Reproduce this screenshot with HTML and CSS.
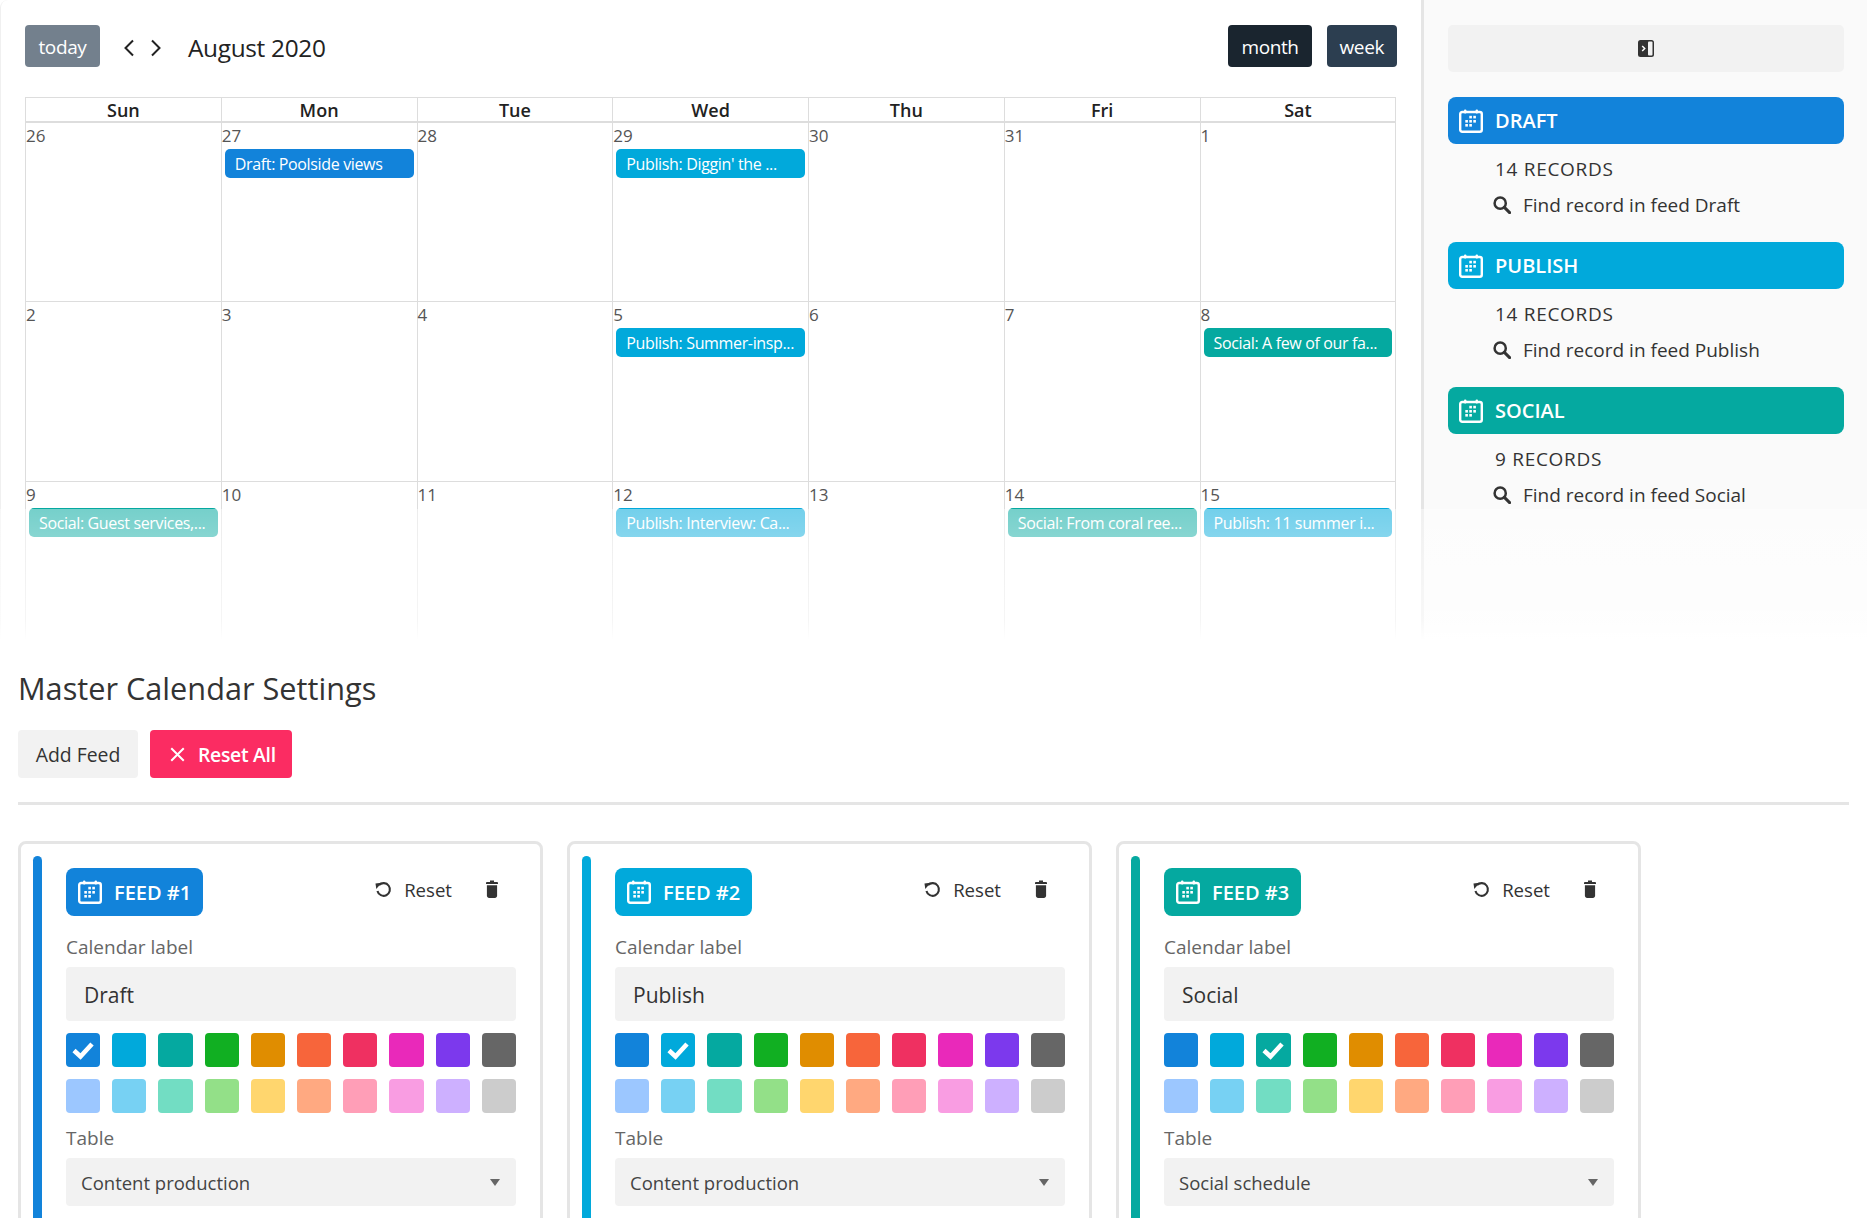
FILE: index.html
```html
<!DOCTYPE html>
<html lang="en">
<head>
<meta charset="utf-8">
<title>Master Calendar</title>
<link rel="stylesheet" href="styles.css">
</head>
<body>
<svg class="defs" aria-hidden="true">
  <symbol id="cal" viewBox="0 0 24 24">
    <rect x="1.2" y="3" width="21.6" height="19.8" rx="2" fill="none" stroke="currentColor" stroke-width="2.4"/>
    <rect x="5" y="0.6" width="2.4" height="4" rx="1" fill="currentColor"/>
    <rect x="16.6" y="0.6" width="2.4" height="4" rx="1" fill="currentColor"/>
    <g fill="currentColor">
      <rect x="10.3" y="6.800" width="2.6" height="2.6"/><rect x="14.3" y="6.800" width="2.6" height="2.6"/>
      <rect x="6.300" y="11" width="2.6" height="2.6"/><rect x="10.3" y="11" width="2.6" height="2.6"/><rect x="14.3" y="11" width="2.6" height="2.6"/>
      <rect x="6.300" y="15" width="2.6" height="2.6"/><rect x="10.3" y="15" width="2.6" height="2.6"/>
    </g>
  </symbol>
  <symbol id="search" viewBox="0 0 18 18">
    <circle cx="7.2" cy="7.2" r="5.6" fill="none" stroke="currentColor" stroke-width="2.5"/>
    <path d="M11.4 11.4 16.6 16.6" stroke="currentColor" stroke-width="3" stroke-linecap="round"/>
  </symbol>
  <symbol id="reset" viewBox="0 0 18 18">
    <path d="M4.2 4.4A6.7 6.7 0 1 1 2.6 10.6" fill="none" stroke="currentColor" stroke-width="2.2"/>
    <path d="M0.8 2.2 7.2 2.2 1 8.2Z" fill="currentColor" transform="rotate(-6 4 5)"/>
  </symbol>
  <symbol id="trash" viewBox="0 0 12 18">
    <path d="M4 .5h4v1.6h3.2c.4 0 .8.4.8.8v1H0v-1c0-.4.4-.8.8-.8H4z" fill="currentColor"/>
    <path d="M.9 5.2h10.2v10.6c0 1.2-1 2.2-2.2 2.2H3.100c-1.200 0-2.200-1-2.200-2.200z" fill="currentColor"/>
  </symbol>
  <symbol id="check" viewBox="0 0 24 20">
    <path d="M3 10.500 9.500 16.500 21 4" fill="none" stroke="currentColor" stroke-width="4.600"/>
  </symbol>
</svg>

<section class="top">
  <div class="calendar">
    <div class="toolbar">
      <div class="toolbar-left">
        <span class="btn btn-today">today</span>
        <span class="nav">
          <svg class="chev" viewBox="0 0 12 18"><path d="M10 1.500 2.500 9 10 16.500" fill="none" stroke="currentColor" stroke-width="2"/></svg>
          <svg class="chev" viewBox="0 0 12 18"><path d="M2 1.500 9.500 9 2 16.500" fill="none" stroke="currentColor" stroke-width="2"/></svg>
        </span>
        <h1 class="cal-title">August 2020</h1>
      </div>
      <div class="toolbar-right">
        <span class="btn btn-month">month</span>
        <span class="btn btn-week">week</span>
      </div>
    </div>
    <div class="grid">
      <div class="dow">Sun</div><div class="dow">Mon</div><div class="dow">Tue</div><div class="dow">Wed</div><div class="dow">Thu</div><div class="dow">Fri</div><div class="dow">Sat</div>

      <div class="day"><span class="num">26</span></div>
      <div class="day"><span class="num">27</span><div class="event blue">Draft: Poolside views</div></div>
      <div class="day"><span class="num">28</span></div>
      <div class="day"><span class="num">29</span><div class="event cyan">Publish: Diggin' the ...</div></div>
      <div class="day"><span class="num">30</span></div>
      <div class="day"><span class="num">31</span></div>
      <div class="day"><span class="num">1</span></div>

      <div class="day"><span class="num">2</span></div>
      <div class="day"><span class="num">3</span></div>
      <div class="day"><span class="num">4</span></div>
      <div class="day"><span class="num">5</span><div class="event cyan">Publish: Summer-insp...</div></div>
      <div class="day"><span class="num">6</span></div>
      <div class="day"><span class="num">7</span></div>
      <div class="day"><span class="num">8</span><div class="event teal">Social: A few of our fa...</div></div>

      <div class="day"><span class="num">9</span><div class="event teal">Social: Guest services,...</div></div>
      <div class="day"><span class="num">10</span></div>
      <div class="day"><span class="num">11</span></div>
      <div class="day"><span class="num">12</span><div class="event cyan">Publish: Interview: Ca...</div></div>
      <div class="day"><span class="num">13</span></div>
      <div class="day"><span class="num">14</span><div class="event teal">Social: From coral ree...</div></div>
      <div class="day"><span class="num">15</span><div class="event cyan">Publish: 11 summer i...</div></div>
    </div>
  </div>

  <aside class="sidebar">
    <div class="collapse">
      <svg class="collapse-icon" viewBox="0 0 16 17">
        <rect x="0" y="0" width="16" height="17" rx="2.500" fill="#333"/>
        <rect x="10" y="1.500" width="4.500" height="14" rx="1" fill="#f2f2f2"/>
        <path d="M4.200 6 6.700 8.500 4.200 11" fill="none" stroke="#fff" stroke-width="1.500"/>
      </svg>
    </div>

    <div class="feed">
      <div class="feed-head blue"><svg class="ico-cal"><use href="#cal"/></svg>DRAFT</div>
      <div class="feed-count">14 RECORDS</div>
      <div class="feed-find"><svg class="ico-search"><use href="#search"/></svg>Find record in feed Draft</div>
    </div>
    <div class="feed">
      <div class="feed-head cyan"><svg class="ico-cal"><use href="#cal"/></svg>PUBLISH</div>
      <div class="feed-count">14 RECORDS</div>
      <div class="feed-find"><svg class="ico-search"><use href="#search"/></svg>Find record in feed Publish</div>
    </div>
    <div class="feed">
      <div class="feed-head teal"><svg class="ico-cal"><use href="#cal"/></svg>SOCIAL</div>
      <div class="feed-count">9 RECORDS</div>
      <div class="feed-find"><svg class="ico-search"><use href="#search"/></svg>Find record in feed Social</div>
    </div>
  </aside>
  <div class="fade"></div>
</section>

<section class="settings">
  <h2 class="settings-title">Master Calendar Settings</h2>
  <div class="actions">
    <span class="action action-add">Add Feed</span>
    <span class="action action-reset">
      <svg class="ico-x" viewBox="0 0 12 12"><path d="M1 1 11 11M11 1 1 11" stroke="currentColor" stroke-width="1.600"/></svg>
      Reset All
    </span>
  </div>
  <hr class="rule">

  <div class="cards">
    <article class="card">
      <div class="card-bar blue"></div>
      <div class="card-body">
        <div class="card-head">
          <div class="badge blue"><svg class="ico-cal"><use href="#cal"/></svg>FEED #1</div>
          <div class="card-tools">
            <span class="tool"><svg class="ico-reset"><use href="#reset"/></svg>Reset</span>
            <svg class="ico-trash"><use href="#trash"/></svg>
          </div>
        </div>
        <div class="label">Calendar label</div>
        <div class="input">Draft</div>
        <div class="swatches">
          <span class="sw s1 on"><svg class="ico-check"><use href="#check"/></svg></span><span class="sw s2"></span><span class="sw s3"></span><span class="sw s4"></span><span class="sw s5"></span><span class="sw s6"></span><span class="sw s7"></span><span class="sw s8"></span><span class="sw s9"></span><span class="sw s10"></span>
          <span class="sw l1"></span><span class="sw l2"></span><span class="sw l3"></span><span class="sw l4"></span><span class="sw l5"></span><span class="sw l6"></span><span class="sw l7"></span><span class="sw l8"></span><span class="sw l9"></span><span class="sw l10"></span>
        </div>
        <div class="label label-table">Table</div>
        <div class="select">Content production<i class="caret"></i></div>
      </div>
    </article>

    <article class="card">
      <div class="card-bar cyan"></div>
      <div class="card-body">
        <div class="card-head">
          <div class="badge cyan"><svg class="ico-cal"><use href="#cal"/></svg>FEED #2</div>
          <div class="card-tools">
            <span class="tool"><svg class="ico-reset"><use href="#reset"/></svg>Reset</span>
            <svg class="ico-trash"><use href="#trash"/></svg>
          </div>
        </div>
        <div class="label">Calendar label</div>
        <div class="input">Publish</div>
        <div class="swatches">
          <span class="sw s1"></span><span class="sw s2 on"><svg class="ico-check"><use href="#check"/></svg></span><span class="sw s3"></span><span class="sw s4"></span><span class="sw s5"></span><span class="sw s6"></span><span class="sw s7"></span><span class="sw s8"></span><span class="sw s9"></span><span class="sw s10"></span>
          <span class="sw l1"></span><span class="sw l2"></span><span class="sw l3"></span><span class="sw l4"></span><span class="sw l5"></span><span class="sw l6"></span><span class="sw l7"></span><span class="sw l8"></span><span class="sw l9"></span><span class="sw l10"></span>
        </div>
        <div class="label label-table">Table</div>
        <div class="select">Content production<i class="caret"></i></div>
      </div>
    </article>

    <article class="card">
      <div class="card-bar teal"></div>
      <div class="card-body">
        <div class="card-head">
          <div class="badge teal"><svg class="ico-cal"><use href="#cal"/></svg>FEED #3</div>
          <div class="card-tools">
            <span class="tool"><svg class="ico-reset"><use href="#reset"/></svg>Reset</span>
            <svg class="ico-trash"><use href="#trash"/></svg>
          </div>
        </div>
        <div class="label">Calendar label</div>
        <div class="input">Social</div>
        <div class="swatches">
          <span class="sw s1"></span><span class="sw s2"></span><span class="sw s3 on"><svg class="ico-check"><use href="#check"/></svg></span><span class="sw s4"></span><span class="sw s5"></span><span class="sw s6"></span><span class="sw s7"></span><span class="sw s8"></span><span class="sw s9"></span><span class="sw s10"></span>
          <span class="sw l1"></span><span class="sw l2"></span><span class="sw l3"></span><span class="sw l4"></span><span class="sw l5"></span><span class="sw l6"></span><span class="sw l7"></span><span class="sw l8"></span><span class="sw l9"></span><span class="sw l10"></span>
        </div>
        <div class="label label-table">Table</div>
        <div class="select">Social schedule<i class="caret"></i></div>
      </div>
    </article>
  </div>
</section>
</body>
</html>
```
FILE: styles.css
```css
* { box-sizing: border-box; }
html, body { margin: 0; height: 1218px; overflow: hidden; }
body { font-family: "Open Sans", "Noto Sans", sans-serif; color: #333; background: #fff; font-size: 18px; }
.defs { position: absolute; width: 0; height: 0; }

.blue { background: #1283da; }
.cyan { background: #01a9db; }
.teal { background: #05a9a0; }

/* top */
.top { position: relative; display: flex; height: 640px; overflow: hidden; }
.calendar { width: 1424px; flex: none; padding: 25px 24px 0 24px; border-left: 1px solid #f0f0f0; border-right: 3px solid #e5e5e5; border-top-left-radius: 8px; }
.toolbar { display: flex; justify-content: space-between; align-items: center; height: 42px; margin-bottom: 30px; }
.toolbar-left, .toolbar-right { display: flex; align-items: center; }
.toolbar-right { gap: 15px; }
.btn { display: flex; align-items: center; height: 42px; padding: 2px 13px 0; border-radius: 4px; color: #fff; font-size: 19px; letter-spacing: -.4px; }
.btn-today { padding: 2px 13.500px 0; background: #73808d; }
.btn-month { background: #1a252f; }
.btn-week { background: #2c3e50; }
.nav { display: flex; gap: 15px; margin: 3px 0 0 23px; color: #222; }
.chev { width: 12px; height: 18px; }
.cal-title { margin: 2px 0 0 26px; font-size: 24.400px; font-weight: 400; color: #222; letter-spacing: -.3px; }

.grid { display: grid; grid-template-columns: repeat(7, 195.750px); grid-template-rows: 25px repeat(3, 179.300px); border-top: 1px solid #ddd; border-left: 1px solid #ddd; width: 1371.250px; }
.dow { border-right: 1px solid #ddd; border-bottom: 2px solid #ddd; text-align: center; font-weight: 600; font-size: 18px; line-height: 25px; color: #222; }
.day { border-right: 1px solid #ddd; border-bottom: 1px solid #ddd; }
.num { display: block; height: 26px; font-size: 17px; line-height: 26px; color: #555; }
.event { height: 29px; margin: 0 3px 0 3px; padding: 0 10px; border-radius: 5px; color: #fff; font-size: 16px; line-height: 30px; white-space: nowrap; overflow: hidden; letter-spacing: -.35px; }

.sidebar { flex: 1; padding: 25px 23px 0 24px; background: #fafafa; }
.collapse { display: flex; align-items: center; justify-content: center; height: 47px; margin-bottom: 25px; background: #f2f2f2; border-radius: 5px; }
.collapse-icon { width: 16px; height: 17px; }
.feed { margin-bottom: 25px; }
.feed-head { display: flex; align-items: center; gap: 12px; height: 47px; padding-left: 11px; border-radius: 8px; color: #fff; font-weight: 600; font-size: 20px; }
.ico-cal { width: 24px; height: 24px; flex: none; color: #fff; }
.feed-count { padding-left: 47px; margin-top: 13px; line-height: 24px; font-size: 19px; letter-spacing: .7px; color: #333; }
.feed-find { display: flex; align-items: center; gap: 12px; padding-left: 45px; margin-top: 12px; line-height: 24px; font-size: 19px; color: #333; }
.ico-search { width: 18px; height: 18px; flex: none; }

.fade { position: absolute; left: 0; right: 0; top: 509px; bottom: 0; background: linear-gradient(rgba(255,255,255,.45), rgba(255,255,255,.72) 85%, #fff); pointer-events: none; }

/* settings */
.settings { padding: 0 18px; }
.settings-title { margin: 28px 0 22px; font-size: 30.700px; line-height: 40px; font-weight: 500; color: #333; }
.actions { display: flex; gap: 12px; }
.action { display: flex; align-items: center; height: 48px; border-radius: 4px; font-size: 19.400px; }
.action-add { justify-content: center; width: 120px; background: #f2f2f2; color: #333; }
.action-reset { width: 142px; padding-left: 20px; background: #fb2c62; color: #fff; gap: 13px; font-weight: 600; letter-spacing: -.3px; }
.ico-x { width: 15px; height: 15px; flex: none; }
.rule { height: 3px; margin: 24px 0 36px; border: 0; background: #e5e5e5; }

.cards { display: flex; gap: 24px; }
.card { display: flex; gap: 24px; width: 525px; height: 700px; padding: 12px 24px 12px 12px; border: 3px solid #e5e5e5; border-radius: 8px; }
.card-bar { width: 9px; flex: none; border-radius: 5px; }
.card-body { flex: 1; padding-top: 12px; }
.card-head { display: flex; justify-content: space-between; height: 48px; }
.badge { display: flex; align-items: center; gap: 12px; height: 48px; padding: 0 12px; border-radius: 8px; color: #fff; font-weight: 600; font-size: 20px; }
.card-tools { display: flex; align-items: center; height: 42px; padding-right: 18px; }
.tool { display: flex; align-items: center; gap: 12px; font-size: 18.600px; color: #333; margin-right: 34px; }
.ico-reset { width: 17px; height: 17px; }
.ico-trash { width: 12px; height: 18px; color: #333; }
.label { margin-top: 19px; line-height: 24px; color: #666; font-size: 19px; font-weight: 500; }
.input { display: flex; align-items: center; height: 54px; margin-top: 8px; padding: 1px 0 0 18px; background: #f2f2f2; border-radius: 4px; font-size: 21px; color: #333; }
.swatches { display: grid; grid-template-columns: repeat(10, 1fr); grid-auto-rows: 34px; gap: 12px; margin-top: 12px; }
.sw { display: flex; align-items: center; justify-content: center; border-radius: 4px; }
.ico-check { width: 24px; height: 20px; color: #fff; }
.s1 { background: #1283da; } .s2 { background: #01a9db; } .s3 { background: #05a9a0; } .s4 { background: #11af22; } .s5 { background: #e08d00; }
.s6 { background: #f7653b; } .s7 { background: #ef3061; } .s8 { background: #e929ba; } .s9 { background: #7c39ed; } .s10 { background: #666; }
.l1 { background: #9cc7ff; } .l2 { background: #77d1f3; } .l3 { background: #72ddc3; } .l4 { background: #93e088; } .l5 { background: #ffd66e; }
.l6 { background: #ffa981; } .l7 { background: #ff9eb7; } .l8 { background: #f99de2; } .l9 { background: #cdb0ff; } .l10 { background: #ccc; }
.label-table { margin-top: 13px; }
.select { position: relative; display: flex; align-items: center; height: 48px; margin-top: 8px; padding-left: 15px; background: #f2f2f2; border-radius: 4px; font-size: 18.500px; color: #444; }
.caret { position: absolute; right: 16px; top: 21px; width: 0; height: 0; border-left: 5px solid transparent; border-right: 5px solid transparent; border-top: 7px solid #666; }
```
